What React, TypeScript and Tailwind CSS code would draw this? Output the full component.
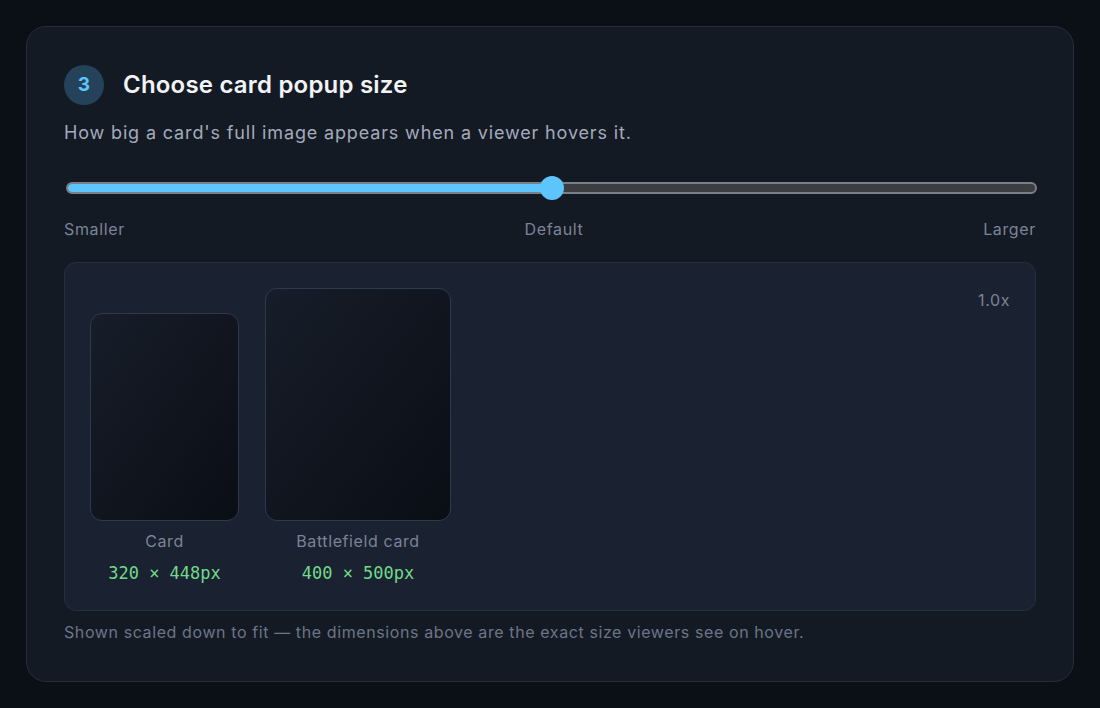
import React, { useState } from "react";

const sizes = [
  { label: "Card", w: 320, h: 448, boxW: 149, boxH: 208 },
  { label: "Battlefield card", w: 400, h: 500, boxW: 186, boxH: 233 },
];

export default function App() {
  const [value] = useState(50);

  return (
    <div className="min-h-screen bg-[#0b0f16] p-[26px] font-['Inter','Noto_Sans',sans-serif]">
      <div className="rounded-[20px] border border-[#262e3b] bg-[#141a24] px-[37px] pt-[38px] pb-[37px]">
        {/* Step header */}
        <div className="flex items-center gap-[19px]">
          <div className="flex size-10 items-center justify-center rounded-full bg-[#24435a] text-[19px] font-bold text-[#5ec5fc]">
            3
          </div>
          <h2 className="text-[24px] font-semibold tracking-[0.2px] text-[#f1f3f6]">
            Choose card popup size
          </h2>
        </div>
        <p className="mt-[14px] text-[18px] leading-[27px] tracking-[0.85px] text-[#a3abbb]">
          How big a card's full image appears when a viewer hovers it.
        </p>

        {/* Slider */}
        <div className="relative -mr-[3px] mt-[30px] flex h-6 items-center px-[2px]">
          <div className="flex h-3 w-full overflow-hidden rounded-full border-2 border-[#7a7f88] bg-[#3b3d41]">
            <div className="h-full bg-[#5ec5fc]" style={{ width: `${value}%` }} />
          </div>
          <div
            className="absolute top-0 size-6 -translate-x-1/2 rounded-full bg-[#5ec5fc]"
            style={{ left: `${value}%` }}
          />
        </div>
        <div className="mt-[17px] flex justify-between text-[16px] leading-6 tracking-[0.65px] text-[#7b8496]">
          <span>Smaller</span>
          <span>Default</span>
          <span>Larger</span>
        </div>

        {/* Preview */}
        <div className="mt-[21px] flex justify-between rounded-xl border border-[#262f3e] bg-[#1a2130] p-[25px]">
          <div className="flex items-end gap-[26px]">
            {sizes.map((s) => (
              <div key={s.label} className="flex flex-col items-center">
                <div
                  className="rounded-xl border border-[#2f394d] bg-gradient-to-br from-[#171d29] to-[#0a0e15]"
                  style={{ width: s.boxW, height: s.boxH }}
                />
                <div className="mt-2 text-[16px] leading-6 tracking-[0.6px] text-[#7b8496]">{s.label}</div>
                <div className="mt-2 font-['DejaVu_Sans_Mono',monospace] text-[17px] leading-6 text-[#72d98a]">
                  {s.w} × {s.h}px
                </div>
              </div>
            ))}
          </div>
          <div className="self-start text-[16px] leading-6 tracking-[0.6px] text-[#7b8496]">1.0x</div>
        </div>
        <p className="mt-[9px] text-[16px] leading-6 tracking-[0.6px] text-[#6c7588]">
          Shown scaled down to fit — the dimensions above are the exact size viewers see on hover.
        </p>
      </div>
    </div>
  );
}
